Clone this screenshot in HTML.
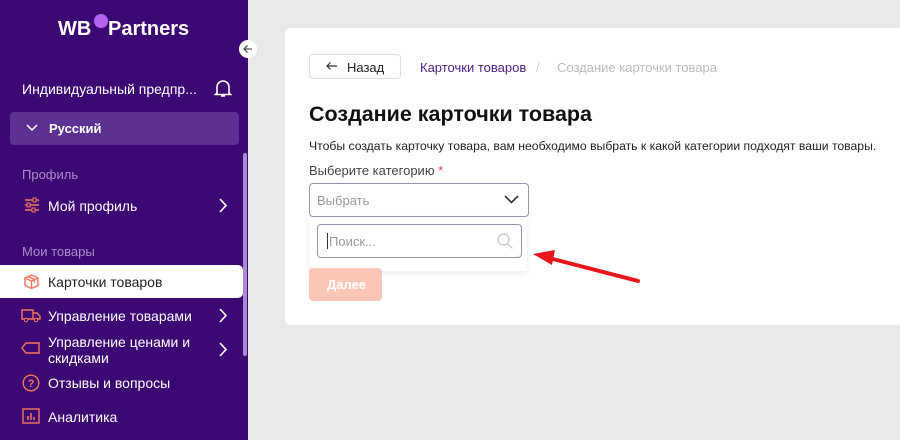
<!DOCTYPE html>
<html><head><meta charset="utf-8"><style>
*{margin:0;padding:0;box-sizing:border-box}
body{width:900px;height:440px;overflow:hidden;background:#e9e9ec;font-family:"Liberation Sans","Noto Sans CJK SC",sans-serif;position:relative}
.sb{position:absolute;left:0;top:0;width:248px;height:440px;background:#3c0873;color:#fff}
.t{position:absolute;white-space:nowrap}
.card{position:absolute;left:285px;top:28px;width:615px;height:297px;background:#fff;border-radius:6px 0 0 6px}
.ic{position:absolute}
</style></head><body>
<div class="sb">
<div class="t" style="left:58px;top:18px;font-size:20px;font-weight:bold">WB</div>
<div class="t" style="left:108px;top:18px;font-size:20px;font-weight:bold">Partners</div>
<div style="position:absolute;left:94px;top:14px;width:14px;height:14px;border-radius:50%;background:#b462f0"></div>
<div class="t" style="left:22px;top:81px;font-size:14px">Индивидуальный предпр...</div>
<svg class="ic" style="left:214px;top:78px" width="18" height="20" viewBox="0 0 18 20"><path d="M3 15V9a6 6 0 0 1 12 0v6l1.5 1.5h-15z M7 18h4" fill="none" stroke="#fff" stroke-width="1.6"/></svg>
<div style="position:absolute;left:10px;top:112px;width:229px;height:33px;background:#5c3192;border-radius:4px"></div>
<svg class="ic" style="left:26px;top:124px" width="12" height="8"><path d="M1 1l5 5 5-5" fill="none" stroke="#fff" stroke-width="1.5"/></svg>
<div class="t" style="left:49px;top:121px;font-size:13px;font-weight:bold">Русский</div>
<div class="t" style="left:22px;top:167px;font-size:13px;color:#a98bc8">Профиль</div>
<svg class="ic" style="left:24px;top:197px" width="16" height="16"><path d="M1 3h14M1 8h14M1 13h14" stroke="#f3765a" stroke-width="1.5"/><rect x="9" y="1" width="3" height="4" fill="#3c0873" stroke="#f3765a"/><rect x="3" y="6" width="3" height="4" fill="#3c0873" stroke="#f3765a"/><rect x="8" y="11" width="3" height="4" fill="#3c0873" stroke="#f3765a"/></svg>
<div class="t" style="left:48px;top:198px;font-size:14px">Мой профиль</div>
<svg class="ic" style="left:219px;top:198px" width="9" height="15"><path d="M1 1l6 6.5L1 14" fill="none" stroke="#fff" stroke-width="1.6"/></svg>
<div class="t" style="left:22px;top:244px;font-size:13px;color:#a98bc8">Мои товары</div>
<div style="position:absolute;left:0;top:265px;width:243px;height:33px;background:#fff;border-radius:0 5px 5px 0"></div>
<svg class="ic" style="left:23px;top:273px" width="17" height="17"><path d="M2 5l6.5-3 6.5 3v7.5l-6.5 3-6.5-3z M2 5l6.5 3 6.5-3 M8.5 8v7.5 M5 3.5l6.5 3v3" fill="none" stroke="#f3765a" stroke-width="1.4"/></svg>
<div class="t" style="left:48px;top:274px;font-size:14px;color:#222">Карточки товаров</div>
<svg class="ic" style="left:21px;top:308px" width="20" height="15"><path d="M1 2h11v9H1z M12 5h4l3 3v3h-7" fill="none" stroke="#f3765a" stroke-width="1.4"/><circle cx="5" cy="12" r="1.8" fill="#3c0873" stroke="#f3765a"/><circle cx="15" cy="12" r="1.8" fill="#3c0873" stroke="#f3765a"/></svg>
<div class="t" style="left:48px;top:308px;font-size:14px">Управление товарами</div>
<svg class="ic" style="left:219px;top:308px" width="9" height="15"><path d="M1 1l6 6.5L1 14" fill="none" stroke="#fff" stroke-width="1.6"/></svg>
<svg class="ic" style="left:21px;top:341px" width="20" height="14"><path d="M5 2h13v10H5L1 7z" fill="none" stroke="#f3765a" stroke-width="1.4"/></svg>
<div class="t" style="left:48px;top:334px;font-size:14px;line-height:16px">Управление ценами и<br>скидками</div>
<svg class="ic" style="left:219px;top:342px" width="9" height="15"><path d="M1 1l6 6.5L1 14" fill="none" stroke="#fff" stroke-width="1.6"/></svg>
<svg class="ic" style="left:22px;top:374px" width="18" height="18"><circle cx="9" cy="9" r="7.8" fill="none" stroke="#f3765a" stroke-width="1.4"/><text x="9" y="13" font-size="11" font-weight="bold" fill="#f3765a" text-anchor="middle" font-family="Liberation Sans">?</text></svg>
<div class="t" style="left:48px;top:375px;font-size:14px">Отзывы и вопросы</div>
<svg class="ic" style="left:22px;top:408px" width="18" height="16"><rect x="1" y="1" width="16" height="14" fill="none" stroke="#f3765a" stroke-width="1.4"/><path d="M6 12V8M9 12V5M12 12V9" stroke="#f3765a" stroke-width="1.5"/></svg>
<div class="t" style="left:48px;top:409px;font-size:14px">Аналитика</div>
<div style="position:absolute;left:243px;top:153px;width:4px;height:203px;background:#a78bd0;border-radius:2px"></div>
</div>
<div style="position:absolute;left:239px;top:40px;width:18px;height:18px;border-radius:50%;background:#fff"></div>
<svg class="ic" style="left:242px;top:43px" width="12" height="12"><path d="M10 6H2M5.5 2.5L2 6l3.5 3.5" fill="none" stroke="#555" stroke-width="1.3"/></svg>
<div class="card">
<div style="position:absolute;left:24px;top:26px;width:92px;height:25px;border:1px solid #ddd;border-radius:4px"></div>
<svg class="ic" style="left:41px;top:33px" width="12" height="10"><path d="M11 5H1M4.5 1.5L1 5l3.5 3.5" fill="none" stroke="#333" stroke-width="1.2"/></svg>
<div class="t" style="left:62px;top:32px;font-size:13px;color:#222">Назад</div>
<div class="t" style="left:135px;top:32px;font-size:13px;color:#4b1d86">Карточки товаров</div>
<div class="t" style="left:251px;top:32px;font-size:13px;color:#ccc">/</div>
<div class="t" style="left:272px;top:32px;font-size:13px;color:#bbb">Создание карточки товара</div>
<div class="t" style="left:24px;top:74px;font-size:21.5px;font-weight:bold;color:#111">Создание карточки товара</div>
<div class="t" style="left:24px;top:111px;font-size:12.2px;color:#222">Чтобы создать карточку товара, вам необходимо выбрать к какой категории подходят ваши товары.</div>
<div class="t" style="left:24px;top:135px;font-size:13px;color:#444">Выберите категорию <span style="color:#e44">*</span></div>
<div style="position:absolute;left:24px;top:155px;width:220px;height:34px;border:1px solid #9c8fb4;border-radius:4px"></div>
<div class="t" style="left:32px;top:165px;font-size:13px;color:#999">Выбрать</div>
<svg class="ic" style="left:219px;top:167px" width="15" height="9"><path d="M1 1l6.5 6.5L14 1" fill="none" stroke="#333" stroke-width="1.6"/></svg>
<div style="position:absolute;left:24px;top:190px;width:218px;height:53px;box-shadow:0 2px 6px rgba(0,0,0,0.08)"></div>
<div style="position:absolute;left:32px;top:196px;width:205px;height:34px;border:1.5px solid #9c8fb4;border-radius:4px;background:#fff"></div>
<div style="position:absolute;left:42px;top:205px;width:1px;height:16px;background:#333"></div>
<div class="t" style="left:44px;top:206px;font-size:13px;color:#999">Поиск...</div>
<svg class="ic" style="left:211px;top:204px" width="18" height="18"><circle cx="7.5" cy="7.5" r="5.5" fill="none" stroke="#ccc" stroke-width="1.4"/><path d="M11.5 11.5l5 5" stroke="#ccc" stroke-width="1.4"/></svg>
<div style="position:absolute;left:24px;top:240px;width:73px;height:33px;background:#fbc6b6;border-radius:4px"></div>
<div class="t" style="left:42px;top:249px;font-size:13px;font-weight:bold;color:#fff">Далее</div>
</div>
<svg class="ic" style="left:525px;top:245px" width="125" height="45"><path d="M113 36L24 13" stroke="#e8151a" stroke-width="4" stroke-linecap="round"/><path d="M8 9L30 5 27 20z" fill="#e8151a"/></svg>
</body></html>
